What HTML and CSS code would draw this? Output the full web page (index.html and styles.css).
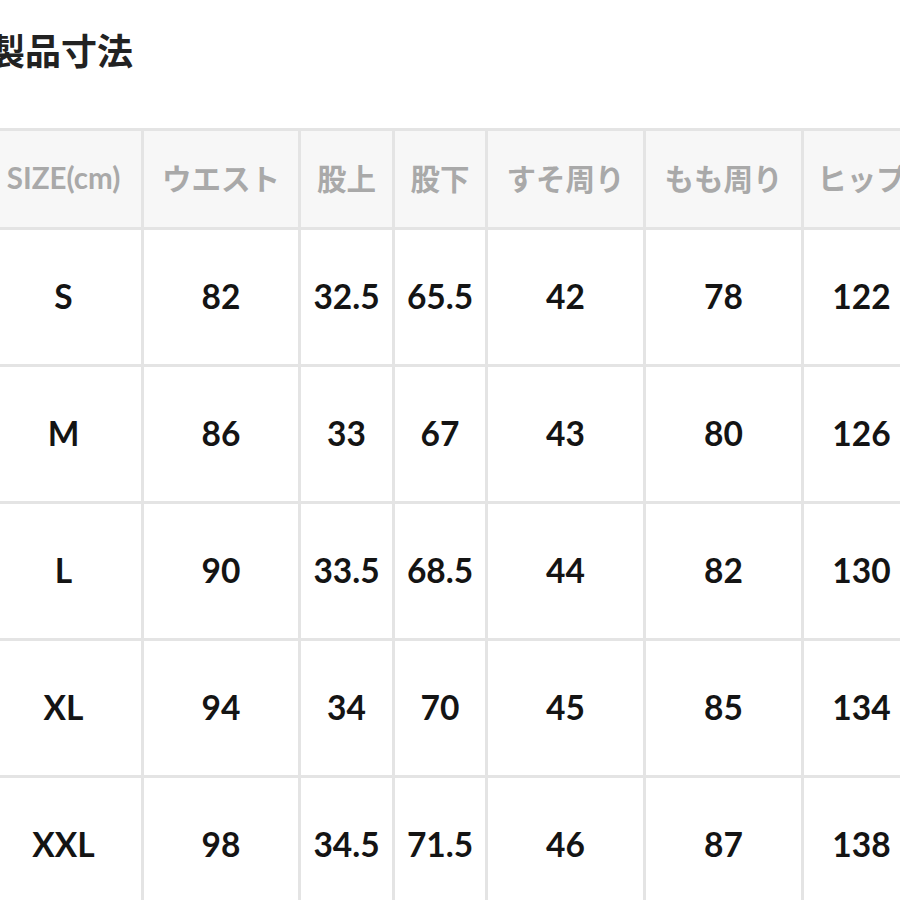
FILE: index.html
```html
<!DOCTYPE html>
<html lang="ja">
<head>
<meta charset="utf-8">
<title>製品寸法</title>
<link rel="stylesheet" href="styles.css">
</head>
<body>
<div class="page">
  <h1 class="title">製品寸法</h1>
  <div class="table">
    <div class="cell head">SIZE(cm)</div>
    <div class="cell head">ウエスト</div>
    <div class="cell head">股上</div>
    <div class="cell head">股下</div>
    <div class="cell head">すそ周り</div>
    <div class="cell head">もも周り</div>
    <div class="cell head">ヒップ</div>

    <div class="cell">S</div><div class="cell">82</div><div class="cell">32.5</div><div class="cell">65.5</div><div class="cell">42</div><div class="cell">78</div><div class="cell">122</div>
    <div class="cell">M</div><div class="cell">86</div><div class="cell">33</div><div class="cell">67</div><div class="cell">43</div><div class="cell">80</div><div class="cell">126</div>
    <div class="cell">L</div><div class="cell">90</div><div class="cell">33.5</div><div class="cell">68.5</div><div class="cell">44</div><div class="cell">82</div><div class="cell">130</div>
    <div class="cell">XL</div><div class="cell">94</div><div class="cell">34</div><div class="cell">70</div><div class="cell">45</div><div class="cell">85</div><div class="cell">134</div>
    <div class="cell">XXL</div><div class="cell">98</div><div class="cell">34.5</div><div class="cell">71.5</div><div class="cell">46</div><div class="cell">87</div><div class="cell">138</div>
  </div>
</div>
</body>
</html>
```
FILE: styles.css
```css
html, body {
  margin: 0;
  padding: 0;
  background: #ffffff;
  overflow: hidden;
  width: 900px;
  height: 900px;
}
body {
  font-family: Lato, "Noto Sans CJK JP", sans-serif;
}
.page {
  padding-top: 31px;
}
.title {
  margin: 0 0 61px -11px;
  font-family: "Noto Sans CJK JP", sans-serif;
  font-size: 36px;
  line-height: 36px;
  height: 36px;
  font-weight: 700;
  color: #222222;
  white-space: nowrap;
}
.table {
  display: grid;
  grid-template-columns: 155px 154px 91px 90px 155px 155px 115px;
  grid-template-rows: 96px repeat(5, 134px);
  gap: 3px;
  padding: 3px;
  margin-left: -17px;
  background: #e4e4e4;
  width: max-content;
}
.cell {
  background: #ffffff;
  display: flex;
  align-items: center;
  justify-content: center;
  padding-bottom: 3px;
  font-size: 33.5px;
  font-weight: 700;
  color: #141414;
  white-space: nowrap;
}
.cell.head {
  background: #f7f7f7;
  padding-bottom: 4px;
  font-size: 29.5px;
  color: #a9a9a9;
}
```
